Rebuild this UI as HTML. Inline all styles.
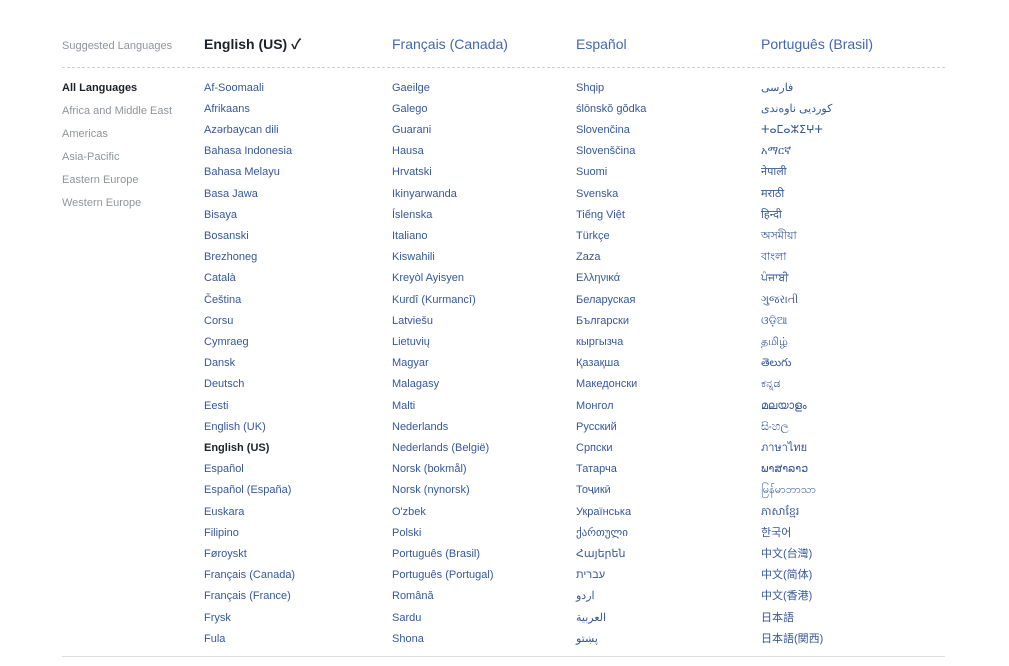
<!DOCTYPE html>
<html><head><meta charset="utf-8"><style>
body{margin:0;background:#fff;font-family:"Liberation Sans","Noto Sans CJK SC",sans-serif;width:1009px;height:666px;overflow:hidden;position:relative}
.h{position:absolute;top:35px;font-size:14px;color:#4267b2;line-height:18px}
.col{position:absolute;top:77.5px;font-size:11px;line-height:21.2px;color:#365899;white-space:nowrap}
.side{color:#90949c}
.dash{position:absolute;left:62px;width:883px;top:67px;border-top:1px dashed #ccd0d5}
.solid{position:absolute;left:62px;width:883px;top:656px;border-top:1px solid #dddfe2}
</style></head><body>
<div class="h" style="left:62px;font-size:11px;color:#90949c;top:37px">Suggested Languages</div>
<div class="h" style="left:204px;color:#1d2129;font-weight:bold">English (US) ✓</div>
<div class="h" style="left:392px">Français (Canada)</div>
<div class="h" style="left:576px">Español</div>
<div class="h" style="left:761px">Português (Brasil)</div>
<div class="dash"></div>
<div class="col side" style="left:62px;line-height:23px;top:76.5px"><b style="color:#1d2129">All Languages</b><br>Africa and Middle East<br>Americas<br>Asia-Pacific<br>Eastern Europe<br>Western Europe</div>
<div class="col" style="left:204px">Af-Soomaali<br>Afrikaans<br>Azərbaycan dili<br>Bahasa Indonesia<br>Bahasa Melayu<br>Basa Jawa<br>Bisaya<br>Bosanski<br>Brezhoneg<br>Català<br>Čeština<br>Corsu<br>Cymraeg<br>Dansk<br>Deutsch<br>Eesti<br>English (UK)<br><b style="color:#1d2129">English (US)</b><br>Español<br>Español (España)<br>Euskara<br>Filipino<br>Føroyskt<br>Français (Canada)<br>Français (France)<br>Frysk<br>Fula</div>
<div class="col" style="left:392px">Gaeilge<br>Galego<br>Guarani<br>Hausa<br>Hrvatski<br>Ikinyarwanda<br>Íslenska<br>Italiano<br>Kiswahili<br>Kreyòl Ayisyen<br>Kurdî (Kurmancî)<br>Latviešu<br>Lietuvių<br>Magyar<br>Malagasy<br>Malti<br>Nederlands<br>Nederlands (België)<br>Norsk (bokmål)<br>Norsk (nynorsk)<br>O'zbek<br>Polski<br>Português (Brasil)<br>Português (Portugal)<br>Română<br>Sardu<br>Shona</div>
<div class="col" style="left:576px">Shqip<br>ślōnskŏ gŏdka<br>Slovenčina<br>Slovenščina<br>Suomi<br>Svenska<br>Tiếng Việt<br>Türkçe<br>Zaza<br>Ελληνικά<br>Беларуская<br>Български<br>кыргызча<br>Қазақша<br>Македонски<br>Монгол<br>Русский<br>Српски<br>Татарча<br>Тоҷикӣ<br>Українська<br>ქართული<br>Հայերեն<br>עברית<br>اردو<br>العربية<br>پښتو</div>
<div class="col" style="left:761px">فارسی<br>کوردیی ناوەندی<br>ⵜⴰⵎⴰⵣⵉⵖⵜ<br>አማርኛ<br>नेपाली<br>मराठी<br>हिन्दी<br>অসমীয়া<br>বাংলা<br>ਪੰਜਾਬੀ<br>ગુજરાતી<br>ଓଡ଼ିଆ<br>தமிழ்<br>తెలుగు<br>ಕನ್ನಡ<br>മലയാളം<br>සිංහල<br>ภาษาไทย<br>ພາສາລາວ<br>မြန်မာဘာသာ<br>ភាសាខ្មែរ<br>한국어<br>中文(台灣)<br>中文(简体)<br>中文(香港)<br>日本語<br>日本語(関西)</div>
<div class="solid"></div>
</body></html>
